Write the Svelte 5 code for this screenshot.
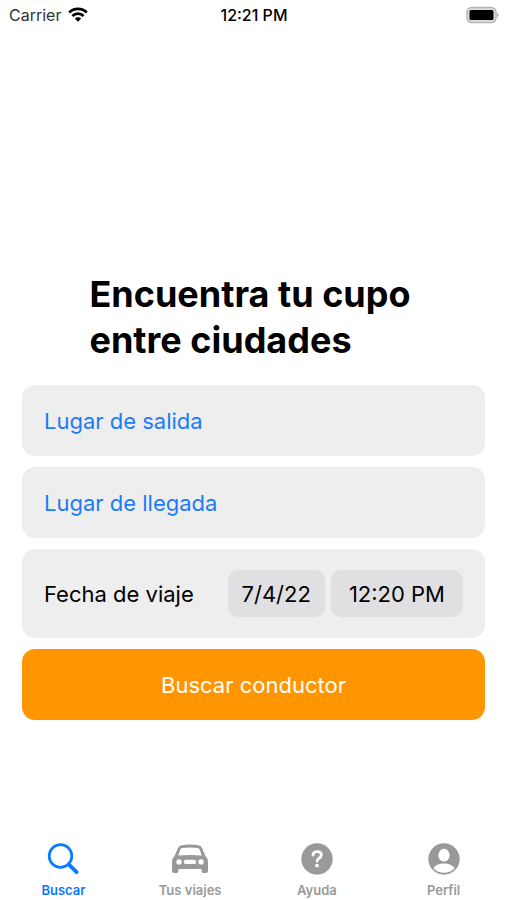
<script>
  let origin = $state("Lugar de salida")
  let destination = $state("Lugar de llegada")
  let date = $state("7/4/22")
  let time = $state("12:20 PM")
  let active = $state("buscar")

  const tabs = [
    { id: "buscar", label: "Buscar" },
    { id: "viajes", label: "Tus viajes" },
    { id: "ayuda", label: "Ayuda" },
    { id: "perfil", label: "Perfil" },
  ]

  const select = (e, id) => {
    e.preventDefault()
    active = id
  }
</script>

<div class="screen">
  <header class="status">
    <div class="carrier">
      <span>Carrier</span>
      <svg width="20" height="15" viewBox="0 0 20 15" aria-hidden="true">
        <g fill="none" stroke="#000" stroke-width="2.8">
          <path d="M1.2 5.4a12.6 12.6 0 0 1 17.6 0" />
          <path d="M4.4 8.9a8 8 0 0 1 11.2 0" />
        </g>
        <path d="M10 14.8 6.8 11.6a4.600 4.600 0 0 1 6.400 0z" />
      </svg>
    </div>
    <time>12:21 PM</time>
    <div class="battery">
      <svg width="34" height="18" viewBox="0 0 34 18" aria-hidden="true">
        <rect x="2" y="1.500" width="29" height="15" rx="4.500" fill="#ddd" stroke="#b4b4b4" stroke-width="1.400" />
        <rect x="4.500" y="4" width="24" height="10" rx="1.500" />
        <path d="M32 7q1.600.6 1.600 2t-1.600 2z" fill="#a8a8a8" />
      </svg>
    </div>
  </header>

  <main>
    <h1>Encuentra tu cupo entre ciudades</h1>
    <div class="form">
      <button class="card place">{origin}</button>
      <button class="card place">{destination}</button>
      <div class="card when">
        <label for="date">Fecha de viaje</label>
        <div class="pickers">
          <button class="picker" id="date">{date}</button>
          <button class="picker time" aria-label="Hora de viaje {time}">{time}</button>
        </div>
      </div>
      <button class="card submit">Buscar conductor</button>
    </div>
  </main>

  <nav>
    {#each tabs as tab}
      <a
        href="#{tab.id}"
        class:active={active === tab.id}
        onclick={(e) => select(e, tab.id)}
      >
        {#if tab.id === "buscar"}
          <svg width="38" height="34" viewBox="0 0 38 34" aria-hidden="true">
            <g fill="none" stroke="currentColor">
              <circle cx="16.500" cy="14" r="11.300" stroke-width="2.700" />
              <path d="m25 22.600 7.600 7.600" stroke-width="3.800" stroke-linecap="round" />
            </g>
          </svg>
        {:else if tab.id === "viajes"}
          <svg width="38" height="34" viewBox="0 0 38 34" aria-hidden="true">
            <path
              fill="currentColor"
              fill-rule="evenodd"
              d="M10.500 3.200q8.500-1.200 17 0 2.600.5 3.600 2.800l3.200 7.800q2.700 2.500 2.700 6v9.400q0 1.800-1.800 1.800h-2.800q-1.800 0-1.800-1.800V27H7.400v2.200q0 1.800-1.800 1.800H2.800Q1 31 1 29.200v-9.400q0-3.500 2.700-6L6.900 6q1-2.300 3.600-2.800zM11.200 6q-1.300.2-1.800 1.400l-2.200 6q11.800-.9 23.600 0l-2.200-6Q28.100 6.200 26.800 6q-7.800-.8-15.600 0zM8 17.200a2.700 2.700 0 1 0 0 5.400 2.700 2.700 0 0 0 0-5.400zm22 0a2.700 2.700 0 1 0 0 5.400 2.700 2.700 0 0 0 0-5.400zM15 17.700a2.200 2.200 0 0 0 0 4.400h8a2.200 2.200 0 0 0 0-4.400z"
            />
          </svg>
        {:else if tab.id === "ayuda"}
          <svg width="38" height="34" viewBox="0 0 38 34" aria-hidden="true">
            <circle cx="19" cy="17" r="15.700" fill="currentColor" />
            <path
              d="M14.900 13.200q.3-3.600 4.200-3.600 4.200 0 4.200 3.400 0 2-2.200 3.300-2 1.200-2 2.900"
              fill="none"
              stroke="#fff"
              stroke-width="2.800"
              stroke-linecap="round"
            />
            <circle cx="19" cy="23.600" r="1.900" fill="#fff" />
          </svg>
        {:else}
          <svg width="38" height="34" viewBox="0 0 38 34" aria-hidden="true">
            <circle cx="19" cy="17" r="15.700" fill="currentColor" />
            <ellipse cx="19" cy="13.200" rx="5.600" ry="6.400" fill="#fff" />
            <path d="M8.400 26.600q2.800-5 10.600-5t10.600 5q-4.400 4.200-10.600 4.200t-10.600-4.200z" fill="#fff" />
          </svg>
        {/if}
        <span>{tab.label}</span>
      </a>
    {/each}
  </nav>
</div>

<style>
  .screen {
    display: flex;
    flex-direction: column;
    min-height: 100vh;
    background: #fff;
    color: #000;
    font-family: Inter, "Liberation Sans", sans-serif;
  }
  button {
    border: 0;
    font: inherit;
    color: inherit;
    cursor: pointer;
  }
  .status {
    display: grid;
    grid-template-columns: 1fr auto 1fr;
    align-items: center;
    height: 29px;
    padding: 0 8px 0 9px;
    font-size: 16px;
  }
  .carrier {
    display: flex;
    align-items: center;
    gap: 7px;
    color: #333;
  }
  .status time {
    font-weight: 500;
  }
  .battery {
    display: flex;
    justify-content: flex-end;
  }
  main {
    display: flex;
    flex: 1;
    flex-direction: column;
    justify-content: flex-end;
    padding: 0 22px 122px;
  }
  h1 {
    width: 328px;
    margin: 0 auto 22px;
    font-size: 36px;
    font-weight: 700;
    line-height: 46px;
  }
  .form {
    display: flex;
    flex-direction: column;
    gap: 11px;
    font-size: 22px;
  }
  .card {
    min-height: 71px;
    padding: 0 22px;
    border-radius: 13px;
    background: #eee;
  }
  .place {
    color: #1a7cf9;
    text-align: left;
  }
  .when {
    display: flex;
    align-items: center;
    justify-content: space-between;
    min-height: 89px;
    box-sizing: border-box;
  }
  .pickers {
    display: flex;
    gap: 6px;
  }
  .picker {
    height: 47px;
    padding: 0 14px;
    border-radius: 10px;
    background: #e0e0e2;
  }
  .time {
    padding: 0 18px;
  }
  .submit {
    background: #ff9500;
    color: #fff;
    text-align: center;
  }
  nav {
    display: flex;
    height: 58px;
  }
  nav a {
    display: flex;
    flex: 1;
    flex-direction: column;
    align-items: center;
    gap: 6px;
    color: #999;
    font-size: 13px;
    font-weight: 600;
    line-height: 16px;
    text-decoration: none;
  }
  nav a.active {
    color: #0a7aff;
  }
</style>
